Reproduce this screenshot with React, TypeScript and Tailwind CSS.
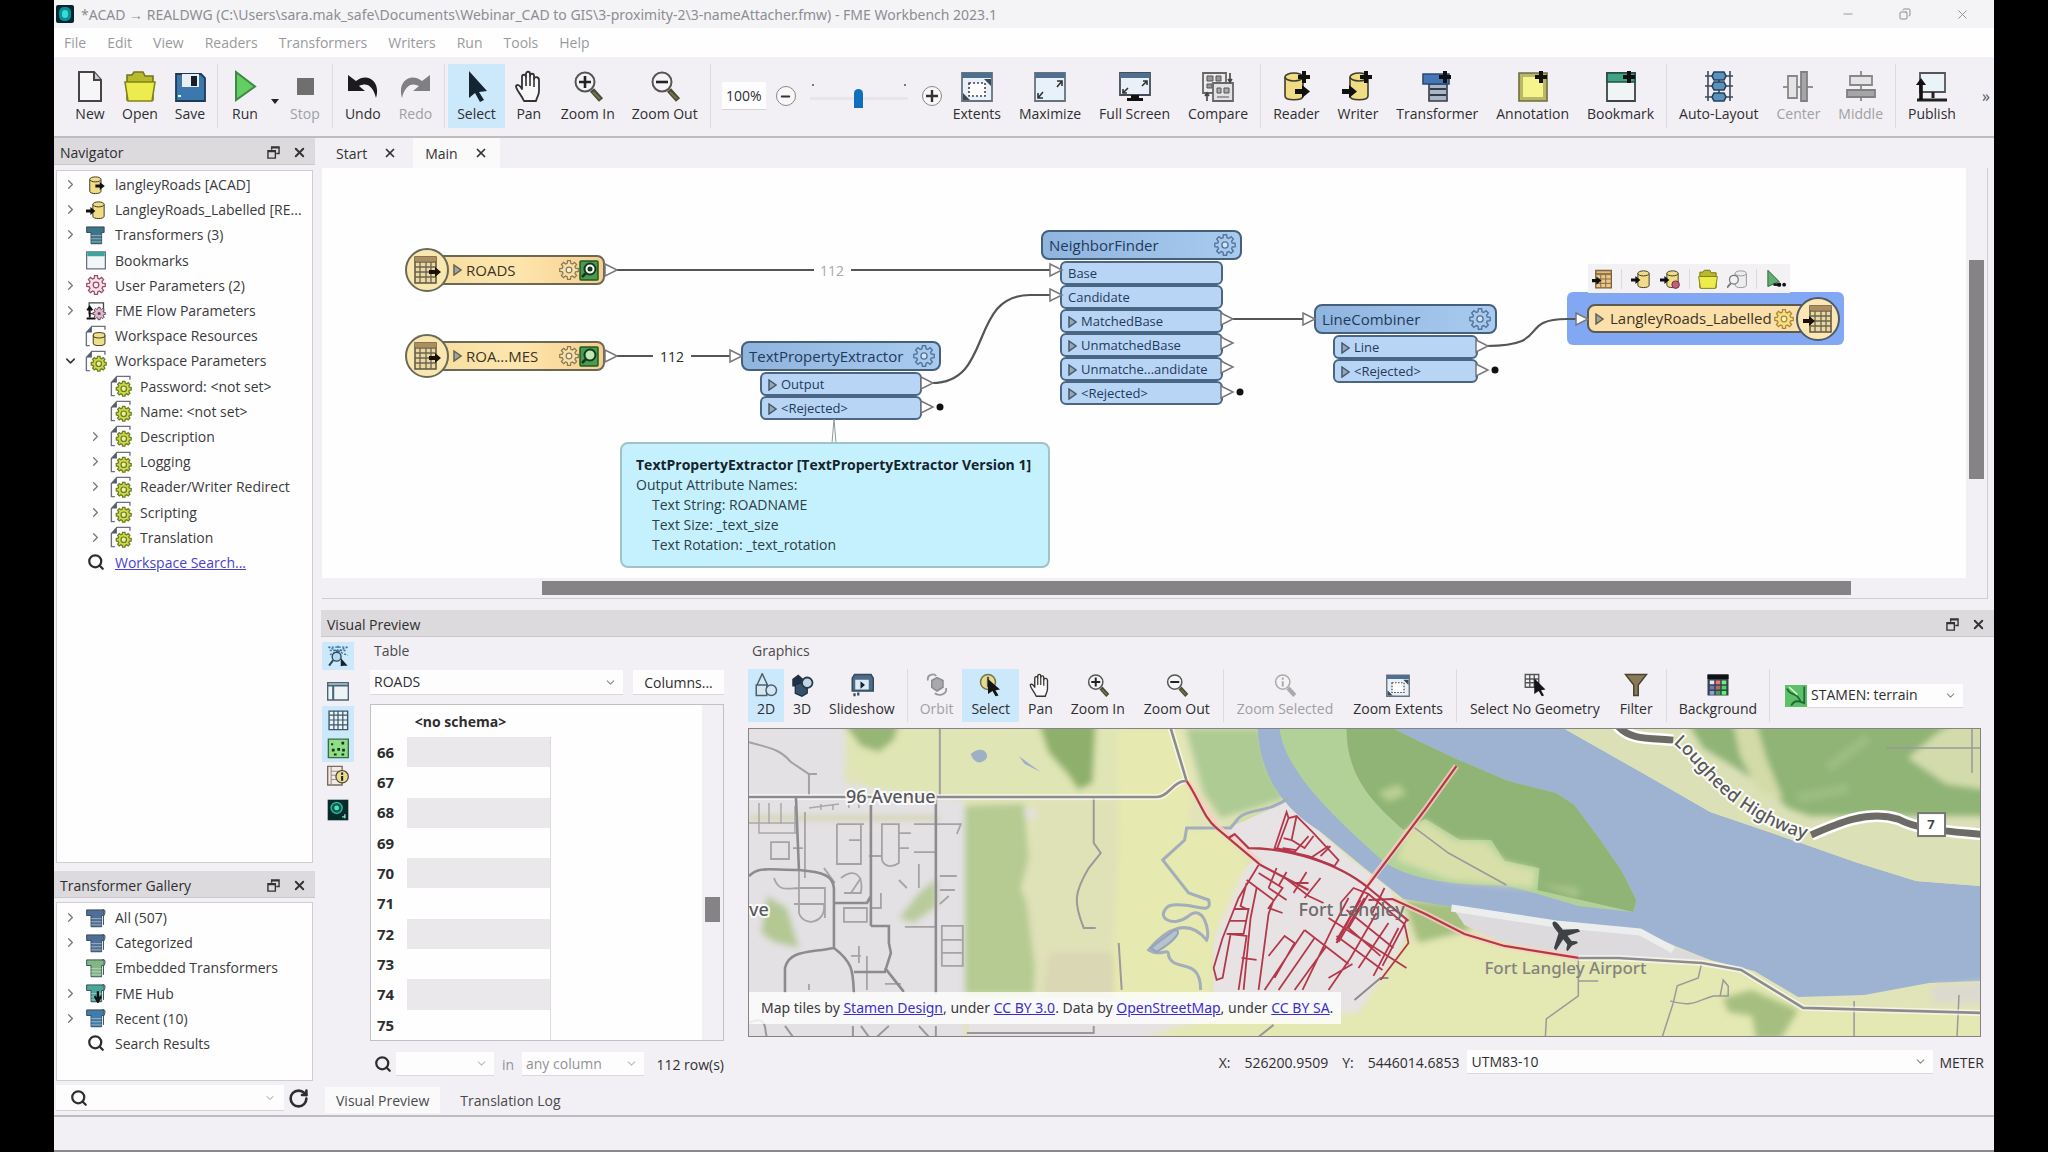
import React from "react";
import { ChevronRight, ChevronDown, Search, X, Minus, Copy, RotateCw } from "lucide-react";

type Kids = { children?: React.ReactNode };

function gearPath(cx: number, cy: number, outer: number, inner: number) {
  const pts: string[] = [];
  const step = Math.PI / 4;
  for (let i = 0; i < 8; i++) {
    const a = i * step;
    const add = (r: number, t: number) =>
      pts.push(`${(cx + r * Math.cos(t)).toFixed(2)},${(cy + r * Math.sin(t)).toFixed(2)}`);
    add(inner, a - step * 0.34);
    add(outer, a - step * 0.2);
    add(outer, a + step * 0.2);
    add(inner, a + step * 0.34);
  }
  return `M${pts.join("L")}Z`;
}

/* ---------- icons ---------- */

function Ico({ s = 32, children }: Kids & { s?: number }) {
  return (
    <svg width={s} height={s} viewBox="0 0 32 32" fill="none" aria-hidden="true" className="shrink-0">
      {children}
    </svg>
  );
}

const PlusMark = () => <path d="M24 1v12M18 7h12" stroke="#111" strokeWidth="4" />;
const Cyl = ({ x = 5, fill = "#f0dc84", stroke = "#3f3d2c" }) => (
  <g transform={`translate(${x} 0)`} fill={fill} stroke={stroke} strokeWidth="1.6">
    <path d="M1 7v19c0 5 18 5 18 0V7" />
    <ellipse cx="10" cy="7" rx="9" ry="4" />
  </g>
);
const Arrow = ({ x, y }: { x: number; y: number }) => (
  <path transform={`translate(${x} ${y})`} d="M0 3h7V-1l8 6.5l-8 6.5V8H0Z" fill="#111" />
);

const NewIcon = () => (
  <Ico>
    <path d="M5 2h15l7 8v21H5Z" fill="#f6f6f8" stroke="#444" strokeWidth="2" />
    <path d="M20 2v8h7" fill="#ccc" stroke="#444" strokeWidth="2" />
  </Ico>
);
const FolderIcon = ({ s = 32 }) => (
  <Ico s={s}>
    <path d="M3 30V5h5l2-3h9l2 4h8v24Z" fill="#b9b92c" stroke="#76761c" strokeWidth="1.6" />
    <path d="M4 31L1 12h30l-3 19Z" fill="#ecec4c" stroke="#83831e" strokeWidth="1.6" />
  </Ico>
);
const SaveIcon = () => (
  <Ico>
    <path d="M2 4h25l4 4v23H2Z" fill="#3b78ae" stroke="#1f3a55" strokeWidth="1.8" />
    <path d="M8 4h17v13H8Z" fill="#e9eef3" />
    <path d="M17 6h6v10h-6Z" fill="#17202a" />
    <path d="M4 26h3" stroke="#cfe" strokeWidth="2" />
  </Ico>
);
const RunIcon = () => (
  <Ico><path d="M7 2l19 14.5L7 30Z" fill="#63cf63" stroke="#3e8a44" strokeWidth="2" /></Ico>
);
const StopIcon = () => <Ico><path d="M8 8h17v17H8Z" fill="#6f6f70" /></Ico>;
const UndoIcon = () => (
  <Ico><path d="M1 5v16h17l-6-5c8-4 14 0 17 12c5-16-8-26-20-17Z" fill="#1b1b1d" /></Ico>
);
const RedoIcon = () => (
  <Ico><path d="M31 5v16H14l6-5C12 12 6 16 3 28C-2 12 11 2 23 11Z" fill="#808083" /></Ico>
);
const SelectIcon = () => (
  <Ico><path d="M8 1l18 20l-8 1l5 8l-4 2l-5-9l-6 5Z" fill="#132432" /></Ico>
);
const PanIcon = ({ s = 32, c = "#333" }) => (
  <Ico s={s}>
    <path d="M11 31C8 24 3 20 3 16c1-2 4-1 6 3V7c0-3 4-3 4 0V4c0-3 4-3 4 0v2c0-3 4-3 4 0v3c1-3 5-2 5 1v11c0 4-2 6-3 10Z" fill="#f8f8f8" stroke={c} strokeWidth="1.8" strokeLinejoin="round" />
    <path d="M13 7v9M17 6v10M21 9v8" stroke={c} strokeWidth="1.6" />
  </Ico>
);
const ZoomIcon = ({ s = 32, kind = "in", off = false }) => (
  <Ico s={s}>
    <path d="M20 20l9 10" stroke={off ? "#aaa" : "#4a4a38"} strokeWidth="5.5" />
    {!off && <path d="M21 22l7 7" stroke="#77724a" strokeWidth="2" />}
    <circle cx="13" cy="12" r="9.5" fill="#f4f4f6" stroke={off ? "#aaa" : "#555"} strokeWidth="2" />
    {kind === "in" && <path d="M13 6v12M7 12h12" stroke="#222" strokeWidth="2.6" />}
    {kind === "out" && <path d="M7 12h12" stroke="#222" strokeWidth="2.6" />}
    {kind === "info" && <path d="M13 6v3M13 11v7" stroke="#aaa" strokeWidth="2.6" />}
  </Ico>
);
const Frame = () => (
  <>
    <path d="M1 3h30v28H1Z" fill="#e8f1fa" stroke="#66737f" strokeWidth="1.8" />
    <path d="M1 3h30v5H1Z" fill="#4e6f8e" />
  </>
);
const ExtentsIcon = ({ s = 32 }) => (
  <Ico s={s}>
    <Frame />
    <path d="M8 13h16v13H8Z" stroke="#444" strokeWidth="1.6" strokeDasharray="2 2" fill="#fff" />
    <path d="M23 9h7v7ZM2 23v7h7Z" fill="#3d4a56" />
  </Ico>
);
const MaximizeIcon = () => (
  <Ico>
    <Frame />
    <path d="M23 17l5-6m-5 0h5v5M9 22l-5 6m0-5v5h5" stroke="#333" strokeWidth="1.6" />
  </Ico>
);
const FullIcon = () => (
  <Ico>
    <path d="M1 3h30v22H1Z" fill="#e8f1fa" stroke="#444e58" strokeWidth="1.8" />
    <path d="M1 3h30v5H1Z" fill="#4e6f8e" />
    <path d="M23 16l5-5m-4 0h4v4M9 18l-5 5m0-4v4h4" stroke="#333" strokeWidth="1.6" />
    <path d="M12 25h8v3h4v3H8v-3h4Z" fill="#111" />
  </Ico>
);
const CompareIcon = () => (
  <Ico>
    <path d="M1 3h23v20H1Z" fill="#ececee" stroke="#666" strokeWidth="1.8" />
    <path d="M5 6h6v5H5ZM14 6h5v5h-5ZM5 14h5v4H5Z" fill="#999" stroke="#555" />
    <path d="M11 13h20v18H11Z" fill="#e2e2e5" stroke="#666" strokeWidth="1.8" />
    <path d="M15 18h4v5h-4ZM22 18h5v5h-5ZM15 27h12" fill="#aaa" stroke="#555" />
    <path d="M28 3v8m-2-2l2 3l2-3M5 31v-7m-2 2l2-3l2 3" stroke="#444" strokeWidth="1.6" />
  </Ico>
);
const ReaderIcon = () => (
  <Ico><Cyl x={4} /><PlusMark /><Arrow x={15} y={16} /></Ico>
);
const WriterIcon = () => (
  <Ico><Cyl x={7} /><PlusMark /><Arrow x={0} y={16} /></Ico>
);
const TransformerIcon = () => (
  <Ico>
    <path d="M8 14h18v17H8Z" fill="#aab6c6" stroke="#333d4a" strokeWidth="1.6" />
    <path d="M9 19h16M9 25h16" stroke="#333d4a" strokeWidth="2" />
    <path d="M2 4h26v10H2Z" fill="#4476b8" stroke="#2c4a70" strokeWidth="1.6" />
    <PlusMark />
  </Ico>
);
const AnnotationIcon = () => (
  <Ico>
    <path d="M2 3h28v28H2Z" fill="#b8b76a" stroke="#6f6e3c" strokeWidth="1.6" />
    <path d="M6 7h20v20H6Z" fill="#f5f58c" />
    <PlusMark />
  </Ico>
);
const BookmarkIcon = () => (
  <Ico>
    <path d="M2 3h28v28H2Z" fill="#f0f4f4" stroke="#3d4443" strokeWidth="1.8" />
    <path d="M2 3h28v9H2Z" fill="#3fa384" stroke="#23503f" strokeWidth="1.6" />
    <PlusMark />
  </Ico>
);
const AutoIcon = () => (
  <Ico>
    <path d="M5 1v30M27 1v30M2 6h28M2 16h28M2 27h28M16 6v21" stroke="#3c4a58" strokeWidth="1.6" />
    <path d="M11 2h10l2 4l-2 4H11L9 6ZM11 12h10l2 4l-2 4H11l-2-4ZM11 23h10l2 4l-2 4H11l-2-4Z" fill="#5a91bd" stroke="#24415a" strokeWidth="1.6" />
  </Ico>
);
const CenterIcon = () => (
  <Ico>
    <path d="M1 17h30" stroke="#888" strokeWidth="1.8" />
    <path d="M6 6h9v22H6Z" fill="#e4e4e6" stroke="#888" strokeWidth="1.8" />
    <path d="M19 2h6v29h-6Z" fill="#a5a5a8" stroke="#808083" strokeWidth="1.8" />
  </Ico>
);
const MiddleIcon = () => (
  <Ico>
    <path d="M16 1v30" stroke="#888" strokeWidth="1.8" />
    <path d="M5 6h22v9H5Z" fill="#e4e4e6" stroke="#888" strokeWidth="1.8" />
    <path d="M2 20h28v7H2Z" fill="#a5a5a8" stroke="#808083" strokeWidth="1.8" />
  </Ico>
);
const PublishIcon = () => (
  <Ico>
    <path d="M4 3h25v19H4Z" fill="#eaf3f8" stroke="#555" strokeWidth="1.8" />
    <path d="M17 22v6M1 30h30" stroke="#222" strokeWidth="3" />
    <path d="M5 30V14" stroke="#111" strokeWidth="3.6" />
    <path d="M0 15l5-7l5 7Z" fill="#111" />
  </Ico>
);

const DbRight = () => <Ico s={20}><Cyl x={5} /><Arrow x={15} y={12} /></Ico>;
const DbLeft = ({ bad = false }) => (
  <Ico s={20}>
    <Cyl x={10} />
    <Arrow x={0} y={12} />
    {bad && <circle cx="25" cy="25" r="6" fill="#c0607a" stroke="#7a2c40" strokeWidth="1.6" />}
  </Ico>
);
const ToolStack = ({ c = "#3f7389", scroll = false, down = false }) => (
  <Ico s={20}>
    <path d="M1 3h28v9h-4v18H8V12H1Z" fill={c} stroke="#2c4150" strokeWidth="1.4" />
    <path d="M8 17h17M8 22h17M8 27h17" stroke="#dfe8ee" strokeOpacity=".6" strokeWidth="1.4" />
    {scroll && <path d="M25 4c6-5 7 5 3 8v15" stroke="#4a5560" strokeWidth="1.6" />}
    {down && <path d="M19 13v12m-5-4l5 9l5-9" stroke="#111" strokeWidth="3.6" />}
  </Ico>
);
const BookmarkSmall = () => (
  <Ico s={20}>
    <path d="M1 3h30v27H1Z" fill="#f3f6f8" stroke="#68727c" strokeWidth="2" />
    <path d="M2 3h28v7H2Z" fill="#3ba79a" />
  </Ico>
);
const GearIcon = ({ s = 20, c = "#a04a66", f = "#f6e3ea" }) => (
  <Ico s={s}>
    <path d={gearPath(16, 16, 15, 11)} fill={f} stroke={c} strokeWidth="2" />
    <circle cx="16" cy="16" r="4.5" fill="#fff" fillOpacity=".5" stroke={c} strokeWidth="2" />
  </Ico>
);
const FlowIcon = () => (
  <Ico s={20}>
    <path d="M5 3h23v17H5Z" stroke="#444" strokeWidth="2" />
    <path d="M6 26V11m-4 4l4-6l4 6M1 28h14" stroke="#111" strokeWidth="3" />
    <path d={gearPath(21, 20, 10, 7.5)} fill="#d9b9cd" stroke="#6a4258" strokeWidth="1.6" />
    <circle cx="21" cy="20" r="2.5" fill="#6a4258" />
  </Ico>
);
const DocGear = ({ db = false }) => (
  <Ico s={22}>
    <path d="M7 30H2V11l8-9h19v5" stroke="#6b707c" strokeWidth="2" />
    <path d="M2 11l8-9v9Z" fill="#555b68" />
    {db ? (
      <g fill="#efdf8a" stroke="#4e4a2c" strokeWidth="1.6">
        <path d="M12 15v11c0 5 17 5 17 0V15" />
        <ellipse cx="20.5" cy="15" rx="8.5" ry="4" />
      </g>
    ) : (
      <>
        <path d={gearPath(20, 20, 11, 8.5)} fill="#cbd94a" stroke="#6d7a22" strokeWidth="1.8" />
        <circle cx="20" cy="20" r="4" fill="#e9f0a0" stroke="#6d7a22" strokeWidth="1.8" />
      </>
    )}
  </Ico>
);
const TableGlyph = ({ flip = false }) => (
  <svg width="30" height="30" viewBox="0 0 30 30" fill="none" aria-hidden="true">
    <g transform={flip ? "translate(6 1)" : "translate(2 1)"}>
      <path d="M1 1h21v26H1Z" fill="#e9d9a0" stroke="#5b5340" strokeWidth="1.5" />
      <path d="M1 1h21v4H1Z" fill="#b08d5a" />
      <path d="M1 6h21M1 11h21M1 16h21M1 21h21M6 6v21M12 6v21M17 6v21" stroke="#6b6350" strokeWidth="1.3" />
    </g>
    <path transform={flip ? "translate(0 13)" : "translate(17 13)"} d="M0 2h6V-1l6 5l-6 5V6H0Z" fill="#1a1208" />
  </svg>
);

const AutoInspectIcon = () => (
  <Ico s={22}>
    <path d="M2 3h28M4 8h24M2 3l28 12M30 3L4 14M16 1v12" stroke="#3c7098" strokeWidth="2" strokeDasharray="3 2" />
    <circle cx="14" cy="17" r="6.5" fill="#b9d7ee" stroke="#2c4860" strokeWidth="2" />
    <path d="M9 22l-6 8" stroke="#2c4860" strokeWidth="3" />
    <path d="M20 19l10 11h-6l-4 1Z" fill="#14202c" />
  </Ico>
);
const LayoutIcon = () => (
  <Ico s={22}>
    <path d="M1 4h30v25H1Z" fill="#eef3f6" stroke="#4b6578" strokeWidth="2" />
    <path d="M1 8h30M9 8v21" stroke="#4b6578" strokeWidth="3" />
  </Ico>
);
const GridIcon = () => (
  <Ico s={22}>
    <path d="M3 3h27v27H3Z" fill="#eaf4fb" stroke="#3f5668" strokeWidth="2" />
    <path d="M3 9h27M3 16h27M3 23h27M10 3v27M16 3v27M23 3v27" stroke="#3f5668" strokeWidth="1.8" />
  </Ico>
);
const ScatterIcon = () => (
  <Ico s={22}>
    <path d="M2 3h29v27H2Z" fill="#8fdf88" stroke="#3f6a45" strokeWidth="2" />
    <path d="M7 17h4v4H7ZM15 16h4v4h-4ZM22 17h4v4h-4ZM21 7h4v4h-4ZM10 24h4v3h-4ZM21 24h4v3h-4ZM6 9h3v3H6Z" fill="#17351c" />
  </Ico>
);
const InfoIcon = () => (
  <Ico s={22}>
    <path d="M1 2h21v27H1Z" fill="#f1ece6" stroke="#786a60" strokeWidth="2" />
    <path d="M6 2v27M6 9h14M6 15h8M6 21h7" stroke="#a08f84" strokeWidth="1.6" />
    <circle cx="22" cy="17" r="9" fill="#e8dc92" stroke="#4c4630" strokeWidth="1.8" />
    <path d="M22 11v3M22 16v7" stroke="#222" strokeWidth="3" />
  </Ico>
);
const InspectorIcon = () => (
  <Ico s={22}>
    <path d="M1 1h30v30H1Z" fill="#062b2b" />
    <circle cx="14" cy="13" r="8" fill="#0e5a50" stroke="#2fb79a" strokeWidth="2" />
    <circle cx="14" cy="13" r="3.5" fill="#56e0b8" />
    <path d="M22 26h3M26 22v6" stroke="#8fe6d0" strokeWidth="2" />
  </Ico>
);
const FmeLogo = () => (
  <svg width="18" height="18" viewBox="0 0 18 18" aria-hidden="true">
    <rect width="18" height="18" rx="2" fill="#04262c" />
    <rect x="3" y="2" width="12" height="14" rx="5" fill="#0b8f96" />
    <rect x="6" y="5" width="6" height="8" rx="3" fill="#35dcd8" />
  </svg>
);
const TwoDIcon = () => (
  <Ico s={24}>
    <path d="M11 1l7 15H4ZM3 16h14v14H3Z" fill="#d7e7f2" stroke="#4a6070" strokeWidth="2" />
    <circle cx="23" cy="23" r="7" fill="#d7e7f2" stroke="#4a6070" strokeWidth="2" />
  </Ico>
);
const ThreeDIcon = () => (
  <Ico s={24}>
    <path d="M3 8l8-6l9 8l-6 8H3Z" fill="#1f3146" />
    <path d="M7 16l8-3l8 3v11l-7 4l-9-4Z" fill="#35506c" stroke="#1a2a3a" strokeWidth="1.6" />
    <circle cx="23" cy="13" r="7" fill="#c4d6e6" stroke="#263a4c" strokeWidth="2.4" />
  </Ico>
);
const SlideIcon = () => (
  <Ico s={24}>
    <path d="M6 2h22l3 5v17H3V7Z" fill="#4d6c88" stroke="#37495a" strokeWidth="2" />
    <path d="M7 9h18v13H7Z" fill="#dcebf7" />
    <path d="M14 11l6 5l-6 5Z" fill="#123" />
    <path d="M6 27v4M11 26v4" stroke="#37495a" strokeWidth="3" />
  </Ico>
);
const OrbitIcon = () => (
  <Ico s={24}>
    <path d="M4 10C2 2 12 0 15 4M28 20c2 9-10 11-15 7" stroke="#999" strokeWidth="2.4" />
    <path d="M9 10l7-4l8 4v9l-8 5l-7-5Z" fill="#a9a9ac" stroke="#8c8c8f" strokeWidth="2" />
  </Ico>
);
const PickIcon = () => (
  <Ico s={24}>
    <circle cx="12" cy="12" r="10" fill="#e2dc8e" stroke="#777348" strokeWidth="2" />
    <path d="M12 5v14" stroke="#555" strokeWidth="3" />
    <path d="M12 8l16 14l-6 1l4 7l-4 1l-4-7l-6 4Z" fill="#151515" />
  </Ico>
);
const NoGeomIcon = () => (
  <Ico s={24}>
    <path d="M3 2h18v17H3ZM9 2v17M15 2v17M3 8h18M3 13h18" stroke="#555" strokeWidth="1.8" />
    <path d="M15 7l15 15l-6 1l4 7l-3 1l-4-7l-6 4Z" fill="#151515" />
  </Ico>
);
const FilterIcon = () => (
  <Ico s={24}><path d="M2 2h28L19 16v14h-6V16Z" fill="#8a7a58" stroke="#4a4334" strokeWidth="2" /></Ico>
);
const BackgroundIcon = () => (
  <Ico s={24}>
    <path d="M2 2h28v28H2Z" fill="#345" />
    <path d="M2 2h28v6H2Z" fill="#111" />
    {["#e8e8e8", "#e77", "#7e7", "#77a", "#b66", "#4d5", "#99d", "#595", "#5f5"].map((c, i) => (
      <rect key={i} x={5 + (i % 3) * 8} y={10 + Math.floor(i / 3) * 7} width="6" height="5" fill={c} />
    ))}
  </Ico>
);
const StamenIcon = () => (
  <Ico s={22}>
    <path d="M0 0h32v32H0Z" fill="#5fc06a" />
    <path d="M3 5c4 12 14 3 20 20M9 30c4-8 10-8 18-4M28 2v26" stroke="#1f6a34" strokeWidth="2.6" />
    <path d="M6 3l12 11" stroke="#d7f5d8" strokeWidth="2" />
  </Ico>
);

/* ---------- window chrome ---------- */

type ButtonProps = { icon: React.ReactNode; label: string; active?: boolean; off?: boolean; pad?: "tight" | "wide" };

function ToolButton({ icon, label, active, off, pad }: ButtonProps) {
  return (
    <button
      type="button"
      disabled={off}
      className={`flex h-16 shrink-0 flex-col items-center justify-between pt-1.5 pb-1 text-[14px] leading-5 whitespace-nowrap ${pad === "tight" ? "px-2" : "px-[9px]"} ${active ? "bg-[#cce8fb]" : ""} ${off ? "text-[#a0a0a3]" : "text-[#2e2e30]"}`}
    >
      {icon}
      <span>{label}</span>
    </button>
  );
}

function ViewButton({ icon, label, active, off, pad }: ButtonProps) {
  const px = pad === "tight" ? "px-1.5" : pad === "wide" ? "px-2.5" : "px-[9px]";
  return (
    <button
      type="button"
      disabled={off}
      className={`flex h-[53px] shrink-0 flex-col items-center pt-1 text-[14px] leading-6 whitespace-nowrap ${px} ${active ? "bg-[#cce8fb]" : ""} ${off ? "text-[#a0a0a3]" : "text-[#2e2e30]"}`}
    >
      {icon}
      <span>{label}</span>
    </button>
  );
}

const Sep = () => <span className="mx-[3px] w-px shrink-0 self-stretch bg-[#dddbe0]" />;

function DockHeader({ title }: { title: string }) {
  return (
    <header className="flex h-[27px] shrink-0 items-center border-b border-[#c9c7cb] bg-[#dcdadd] pt-0.5 pr-2 pl-1.5 text-[14px] text-[#2e2e30]">
      <h2 className="flex-1">{title}</h2>
      <button type="button" aria-label={`Float ${title}`} className="mr-3">
        <svg width="13" height="13" viewBox="0 0 14 14" fill="none" stroke="#333" strokeWidth="1.5">
          <path d="M5 4V1h8v7h-3M5 2h8M1 5h8v8H1ZM1 6h8" />
        </svg>
      </button>
      <button type="button" aria-label={`Close ${title}`}>
        <X size={15} strokeWidth={3} color="#333" />
      </button>
    </header>
  );
}

function Combo({ label, value, className, off }: { label: string; value: string; className: string; off?: boolean }) {
  return (
    <div className={`relative flex items-center border-b border-[#dad8dc] bg-[#fdfdfe] ${className}`}>
      <select
        aria-label={label}
        disabled={off}
        className={`w-full appearance-none bg-transparent pr-6 pl-1 text-[14px] leading-6 outline-none ${off ? "text-[#929295] opacity-100" : "text-[#2e2e30]"}`}
      >
        <option>{value}</option>
      </select>
      <ChevronDown size={13} color={off ? "#bbb" : "#888"} className="pointer-events-none absolute right-1.5" />
    </div>
  );
}

const menus = ["File", "Edit", "View", "Readers", "Transformers", "Writers", "Run", "Tools", "Help"];

function TitleBar() {
  return (
    <header className="flex h-7 shrink-0 items-center bg-[#f4f4f6] text-[14px] text-[#8d8d92]">
      <span className="mr-[7px] ml-[2px]"><FmeLogo /></span>
      <h1 className="flex-1 font-['Noto_Sans',sans-serif] whitespace-nowrap">
        *ACAD → REALDWG (C:\Users\sara.mak_safe\Documents\Webinar_CAD to GIS\3-proximity-2\3-nameAttacher.fmw) - FME Workbench 2023.1
      </h1>
      <div className="flex items-center gap-11 pr-6">
        <button type="button" aria-label="Minimize"><Minus size={14} strokeWidth={1.5} /></button>
        <button type="button" aria-label="Restore"><Copy size={12} strokeWidth={2} className="-scale-x-100" /></button>
        <button type="button" aria-label="Close"><X size={15} strokeWidth={1.5} /></button>
      </div>
    </header>
  );
}

function MainToolbar() {
  return (
    <div role="toolbar" aria-label="Main" className="flex h-[81px] shrink-0 items-start overflow-hidden border-b-2 border-[#bebcc0] bg-[#f2f0f4] pt-[7px] pl-3">
      <div className="flex h-16 min-w-0 flex-1 items-center">
        <ToolButton icon={<NewIcon />} label="New" pad="tight" />
        <ToolButton icon={<FolderIcon />} label="Open" pad="tight" />
        <ToolButton icon={<SaveIcon />} label="Save" pad="tight" />
        <Sep />
        <ToolButton icon={<RunIcon />} label="Run" pad="tight" />
        <button type="button" aria-label="Run options" className="mt-3 px-0.5">
          <svg width="8" height="6" viewBox="0 0 8 6"><path d="M0 0h8L4 5Z" fill="#222" /></svg>
        </button>
        <ToolButton icon={<StopIcon />} label="Stop" off pad="tight" />
        <Sep />
        <ToolButton icon={<UndoIcon />} label="Undo" />
        <ToolButton icon={<RedoIcon />} label="Redo" off />
        <Sep />
        <ToolButton icon={<SelectIcon />} label="Select" active />
        <ToolButton icon={<PanIcon />} label="Pan" pad="tight" />
        <ToolButton icon={<ZoomIcon />} label="Zoom In" pad="tight" />
        <ToolButton icon={<ZoomIcon kind="out" />} label="Zoom Out" />
        <Sep />
        <input aria-label="Zoom level" defaultValue="100%" className="ml-2 h-7 w-11 shrink-0 border-b border-[#d5d3d7] bg-[#fdfdfe] text-center text-[14px] text-[#2e2e30] outline-none" />
        <button type="button" aria-label="Decrease zoom" className="ml-2.5 flex size-5 shrink-0 items-center justify-center rounded-full border border-[#888] bg-[#f8f8f9]">
          <Minus size={13} strokeWidth={3.5} color="#333" />
        </button>
        <span className="mx-3.5 flex w-[98px] shrink-0 flex-col">
          <span className="flex h-1 justify-between px-0.5"><i className="size-0.5 bg-[#777]" /><i className="size-0.5 bg-[#777]" /></span>
          <input
            type="range"
            aria-label="Zoom"
            defaultValue={50}
            className="h-5 w-full appearance-none bg-transparent outline-none [&::-webkit-slider-runnable-track]:h-[3px] [&::-webkit-slider-runnable-track]:bg-[#e7e5e9] [&::-webkit-slider-thumb]:-mt-2 [&::-webkit-slider-thumb]:h-[19px] [&::-webkit-slider-thumb]:w-[9px] [&::-webkit-slider-thumb]:appearance-none [&::-webkit-slider-thumb]:rounded-t-full [&::-webkit-slider-thumb]:bg-[#0f6fbe]"
          />
        </span>
        <button type="button" aria-label="Increase zoom" className="mr-0.5 flex size-5 shrink-0 items-center justify-center rounded-full border border-[#888] bg-[#f8f8f9]">
          <svg width="12" height="12" viewBox="0 0 12 12"><path d="M6 0v12M0 6h12" stroke="#333" strokeWidth="2.4" /></svg>
        </button>
        <ToolButton icon={<ExtentsIcon />} label="Extents" />
        <ToolButton icon={<MaximizeIcon />} label="Maximize" />
        <ToolButton icon={<FullIcon />} label="Full Screen" />
        <ToolButton icon={<CompareIcon />} label="Compare" />
        <Sep />
        <ToolButton icon={<ReaderIcon />} label="Reader" />
        <ToolButton icon={<WriterIcon />} label="Writer" />
        <ToolButton icon={<TransformerIcon />} label="Transformer" />
        <ToolButton icon={<AnnotationIcon />} label="Annotation" />
        <ToolButton icon={<BookmarkIcon />} label="Bookmark" />
        <Sep />
        <ToolButton icon={<AutoIcon />} label="Auto-Layout" />
        <ToolButton icon={<CenterIcon />} label="Center" off />
        <ToolButton icon={<MiddleIcon />} label="Middle" off />
        <Sep />
        <ToolButton icon={<PublishIcon />} label="Publish" />
        <button type="button" aria-label="More tools" className="mr-1 ml-auto text-[16px] leading-4 text-[#555]">»</button>
      </div>
    </div>
  );
}

/* ---------- side panels ---------- */

type Row = { label: string; icon: React.ReactNode; open?: "closed" | "open"; child?: boolean; link?: boolean };

const SearchGlyph = () => <Search size={18} strokeWidth={3} color="#2e2e30" />;

const navRows: Row[] = [
  { label: "langleyRoads [ACAD]", icon: <DbRight />, open: "closed" },
  { label: "LangleyRoads_Labelled [RE...", icon: <DbLeft />, open: "closed" },
  { label: "Transformers (3)", icon: <ToolStack />, open: "closed" },
  { label: "Bookmarks", icon: <BookmarkSmall /> },
  { label: "User Parameters (2)", icon: <GearIcon />, open: "closed" },
  { label: "FME Flow Parameters", icon: <FlowIcon />, open: "closed" },
  { label: "Workspace Resources", icon: <DocGear db /> },
  { label: "Workspace Parameters", icon: <DocGear />, open: "open" },
  { label: "Password: <not set>", icon: <DocGear />, child: true },
  { label: "Name: <not set>", icon: <DocGear />, child: true },
  { label: "Description", icon: <DocGear />, open: "closed", child: true },
  { label: "Logging", icon: <DocGear />, open: "closed", child: true },
  { label: "Reader/Writer Redirect", icon: <DocGear />, open: "closed", child: true },
  { label: "Scripting", icon: <DocGear />, open: "closed", child: true },
  { label: "Translation", icon: <DocGear />, open: "closed", child: true },
  { label: "Workspace Search...", icon: <SearchGlyph />, link: true },
];

const galleryRows: Row[] = [
  { label: "All (507)", icon: <ToolStack c="#506f96" scroll />, open: "closed" },
  { label: "Categorized", icon: <ToolStack c="#506f96" scroll />, open: "closed" },
  { label: "Embedded Transformers", icon: <ToolStack c="#82b785" scroll /> },
  { label: "FME Hub", icon: <ToolStack c="#4aa79a" scroll down />, open: "closed" },
  { label: "Recent (10)", icon: <ToolStack c="#417da8" scroll />, open: "closed" },
  { label: "Search Results", icon: <SearchGlyph /> },
];

function Tree({ rows, className }: { rows: Row[]; className: string }) {
  return (
    <ul className={`grid auto-rows-fr text-[14px] text-[#3a3a3d] ${className}`}>
      {rows.map((r) => (
        <li key={r.label} className={`flex items-center whitespace-nowrap ${r.child ? "pl-[31px]" : "pl-1.5"}`}>
          <span className="flex w-[15px] justify-center">
            {r.open === "closed" && <ChevronRight size={15} strokeWidth={2} color="#777" />}
            {r.open === "open" && <ChevronDown size={16} strokeWidth={2.4} color="#333" />}
          </span>
          <span className="ml-[7px] flex w-[22px] justify-center">{r.icon}</span>
          <span className="ml-2">
            {r.link ? <a href="#search" className="text-[#4a3fd0] underline">{r.label}</a> : r.label}
          </span>
        </li>
      ))}
    </ul>
  );
}

function SidePanels() {
  return (
    <aside className="flex w-[261px] shrink-0 flex-col">
      <DockHeader title="Navigator" />
      <section aria-label="Navigator" className="mx-0.5 mt-[5px] mb-2 flex-1 border border-[#cfcdd2] bg-[#fefefe] pt-px">
        <Tree rows={navRows} className="h-[403px]" />
      </section>
      <DockHeader title="Transformer Gallery" />
      <section aria-label="Transformer Gallery" className="mx-0.5 mt-1 h-[179px] border border-[#cfcdd2] bg-[#fefefe] pt-0.5">
        <Tree rows={galleryRows} className="h-[151px]" />
      </section>
      <div className="mt-1 mb-1 flex h-[26px] items-center pl-0.5">
        <label className="flex h-full w-[228px] items-center border-b border-[#d5d3d7] bg-[#fdfdfe] pr-2 pl-3.5">
          <SearchGlyph />
          <input aria-label="Search transformers" className="min-w-0 flex-1 bg-transparent text-[14px] outline-none" />
          <ChevronDown size={12} color="#999" />
        </label>
        <button type="button" aria-label="Refresh" className="ml-1"><RotateCw size={21} strokeWidth={3} color="#2e2e30" /></button>
      </div>
    </aside>
  );
}

/* ---------- canvas ---------- */

const PlayMark = ({ c = "#44586e" }) => (
  <svg width="9" height="12" viewBox="0 0 9 12" className="shrink-0" aria-hidden="true">
    <path d="M1 1l7 5l-7 5Z" fill="#9aa7b3" stroke={c} strokeWidth="1.5" />
  </svg>
);

function Feature({ name, className, viewed }: { name: string; className: string; viewed?: boolean }) {
  return (
    <div className={`absolute flex h-11 w-[200px] items-center ${className}`}>
      <div className="ml-[21px] flex h-[30px] flex-1 items-center rounded-r-lg border-2 border-[#6b6858] bg-linear-to-r from-[#f6dea0] via-[#fde6ae] to-[#f8cf8c] pr-1 pl-[25px] text-[15px] text-[#3a3424]">
        <PlayMark c="#6b6040" />
        <span className="ml-1 flex-1 whitespace-nowrap">{name}</span>
        <GearIcon s={20} c="#8a7a58" f="#f8dfa6" />
        <svg width="20" height="22" viewBox="0 0 20 22" aria-hidden="true">
          <rect x="1" y="2" width="18" height="19" rx="1" fill="#4c9a50" stroke="#215a28" strokeWidth="1.5" />
          <circle cx="11" cy="10" r="5.5" fill={viewed ? "#fff" : "#bfe8b4"} stroke="#123b1b" strokeWidth="2" />
          {viewed && <circle cx="11" cy="10" r="2.5" fill="#123b1b" />}
          <path d="M7 14l-4 4" stroke="#123b1b" strokeWidth="2.5" />
        </svg>
      </div>
      <span className="absolute left-0 flex size-11 items-center justify-center rounded-full border-2 border-[#6b6858] bg-[#f9e7b0]">
        <TableGlyph />
      </span>
    </div>
  );
}

type Port = { name: string; input?: boolean };

function Transformer({ name, ports, className }: { name: string; ports: Port[]; className: string }) {
  return (
    <div className={`absolute ${className}`}>
      <div className="flex h-[30px] items-center rounded-lg border-2 border-[#46607c] bg-linear-to-r from-[#8fb4de] to-[#a9cbef] pr-1 pl-1.5 text-[15px] text-[#1f3a5c]">
        <span className="flex-1">{name}</span>
        <GearIcon s={22} c="#54759b" f="#a9c9ee" />
      </div>
      <ul className="mx-[19px] mt-px">
        {ports.map((p) => (
          <li key={p.name} className="flex h-6 items-center gap-1 rounded-md border-2 border-[#4a6684] bg-[#b9d5f5] pt-0.5 pl-1.5 text-[13px] whitespace-nowrap text-[#1f3a5c]">
            {!p.input && <PlayMark />}
            {p.name}
          </li>
        ))}
      </ul>
    </div>
  );
}

const portTriangles = [
  [283, 102], [283, 188], [408, 188], [599, 215], [599, 239], [728, 102], [728, 127], [899, 151],
  [899, 175], [899, 199], [899, 224], [981, 151], [1154, 178], [1154, 202], [1254, 151],
];
const portDots = [[618, 239], [918, 224], [1173, 202]];

function Links() {
  return (
    <svg className="pointer-events-none absolute inset-0 h-full w-full" fill="none" aria-hidden="true">
      <g stroke="#555558" strokeWidth="2.2">
        <path d="M293 102H492M529 102H729" />
        <path d="M293 188H331M369 188H409" />
        <path d="M610 215C672 215 646 127 708 127H729" />
        <path d="M909 151H982" />
        <path d="M1165 178C1230 178 1195 151 1245 151H1256" />
      </g>
      {portTriangles.map(([x, y]) => (
        <path key={`${x}-${y}`} d={`M${x} ${y - 6}l12 6l-12 6Z`} fill="#fff" stroke="#77777c" strokeWidth="1.5" />
      ))}
      {portDots.map(([x, y]) => <circle key={x} cx={x} cy={y} r="3.5" fill="#111" />)}
      <path d="M512 251L510 275M512 251L514 275" stroke="#8d9a9a" />
    </svg>
  );
}

function Canvas() {
  return (
    <section aria-label="Workspace" className="flex h-[431px] shrink-0 flex-col border-r border-b border-[#cfcdd2]">
      <div className="flex min-h-0 flex-1">
        <div className="relative min-w-0 flex-1 overflow-hidden bg-[#fefefe]">
          <Feature name="ROADS" className="top-[80px] left-[83px]" viewed />
          <Feature name="ROA...MES" className="top-[166px] left-[83px]" />
          <Transformer
            name="TextPropertyExtractor"
            className="top-[173px] left-[419px] w-[200px]"
            ports={[{ name: "Output" }, { name: "<Rejected>" }]}
          />
          <Transformer
            name="NeighborFinder"
            className="top-[62px] left-[719px] w-[201px]"
            ports={[{ name: "Base", input: true }, { name: "Candidate", input: true }, { name: "MatchedBase" }, { name: "UnmatchedBase" }, { name: "Unmatche...andidate" }, { name: "<Rejected>" }]}
          />
          <Transformer
            name="LineCombiner"
            className="top-[136px] left-[992px] w-[183px]"
            ports={[{ name: "Line" }, { name: "<Rejected>" }]}
          />
          <div className="absolute top-[124px] left-[1245px] h-[53px] w-[277px] rounded-md bg-[#82a8f3]">
            <div className="absolute top-3 left-5 flex h-[29px] w-[230px] items-center rounded-l-lg border-2 border-[#5d5a4a] bg-[#fbe0ab] pl-1.5 text-[15px] text-[#3a3424]">
              <PlayMark c="#6b6040" />
              <span className="ml-1.5 whitespace-nowrap">LangleyRoads_Labelled</span>
              <span className="ml-0.5"><GearIcon s={20} c="#b0823c" f="#f3e27c" /></span>
            </div>
            <span className="absolute top-[5px] right-1 flex size-11 items-center justify-center rounded-full border-2 border-[#4e5a66] bg-[#fbe6b4]">
              <TableGlyph flip />
            </span>
          </div>
          <div role="toolbar" aria-label="Feature type" className="absolute top-[96px] left-[1266px] flex h-[29px] w-[202px] items-center justify-between bg-[#f4f1f4] px-1">
            <button type="button" aria-label="Properties">
              <Ico s={20}>
                <path d="M6 2h25v28H6Z" fill="#e8c88c" stroke="#7a5a34" strokeWidth="2" />
                <path d="M6 9h25M6 16h25M6 23h25M14 9v21M22 9v21M6 3h25v4H6Z" stroke="#8a6a40" strokeWidth="1.6" />
                <Arrow x={0} y={13} />
              </Ico>
            </button>
            <span className="h-5 w-px bg-[#dcdadd]" />
            <button type="button" aria-label="Writer"><DbLeft /></button>
            <button type="button" aria-label="Writer parameters"><DbLeft bad /></button>
            <span className="h-5 w-px bg-[#dcdadd]" />
            <button type="button" aria-label="Open folder"><FolderIcon s={20} /></button>
            <button type="button" aria-label="Inspect">
              <Ico s={20}>
                <Cyl x={12} fill="#ececee" stroke="#999" />
                <circle cx="11" cy="17" r="7" fill="#f2f2f4" stroke="#777" strokeWidth="2" />
                <path d="M6 23l-6 7" stroke="#777" strokeWidth="3" />
              </Ico>
            </button>
            <span className="h-5 w-px bg-[#dcdadd]" />
            <button type="button" aria-label="Run to this">
              <Ico s={20}>
                <path d="M3 2l18 18l-18 8Z" fill="#5fae72" stroke="#2f6a42" strokeWidth="1.6" />
                <path d="M12 25h8" stroke="#111" strokeWidth="4" />
                <circle cx="21" cy="25" r="3.5" fill="#111" /><circle cx="29" cy="25" r="3" fill="#111" />
              </Ico>
            </button>
          </div>
          <Links />
          <span className="absolute top-[93px] left-[498px] text-[14px] leading-5 text-[#a9a9ab]">112</span>
          <span className="absolute top-[179px] left-[338px] text-[14px] leading-5 text-[#2b2b2b]">112</span>
          <div className="absolute top-[274px] left-[298px] w-[430px] rounded-lg border-2 border-[#9fc4c4] bg-[#c5f0fe] px-3.5 py-[11px] text-[14px] leading-5 whitespace-nowrap text-[#2c3e46]">
            <p className="font-bold text-[#14242c]">TextPropertyExtractor [TextPropertyExtractor Version 1]</p>
            <p>Output Attribute Names:</p>
            <div className="pl-4">
              <p>Text String: ROADNAME</p>
              <p>Text Size: _text_size</p>
              <p>Text Rotation: _text_rotation</p>
            </div>
          </div>
        </div>
        <div className="w-[21px] shrink-0 bg-[#f2f0f4] pt-[92px]"><div className="mx-[3px] h-[219px] bg-[#858385]" /></div>
      </div>
      <div className="h-5 shrink-0 bg-[#f2f0f4] pt-[3px] pr-[136px] pl-[220px]"><div className="h-3.5 bg-[#858385]" /></div>
    </section>
  );
}

/* ---------- map ---------- */

function TerrainMap() {
  return (
    <svg viewBox="0 0 1232 309" preserveAspectRatio="xMidYMid slice" className="h-full w-full" role="img" aria-label="Terrain map of Fort Langley" fontFamily="Noto Sans, sans-serif">
      <defs>
        <filter id="soft" x="-5%" y="-5%" width="110%" height="110%"><feGaussianBlur stdDeviation="3" /></filter>
        <path id="lougheed" d="M925 15C948 35 960 58 990 78C1012 93 1032 105 1066 113" />
      </defs>
      <rect width="1232" height="309" fill="#e1e3b9" />
      <g filter="url(#soft)">
        <path d="M-10-10H96V55L216 72V88L300 80H340L216 100V320H-10Z" fill="#e3e1e3" />
        <path d="M96-5H420V70H190L120 60L100 35Z" fill="#dfe5b4" />
        <path d="M95-5H150L145 12L130 24L112 18Z" fill="#97b676" />
        <path d="M290-5H347L344 55L330 62L318 45L300 25Z" fill="#8eb06c" />
        <path d="M216 78L275 76L280 130L272 160L288 200L285 266H216Z" fill="#b5cb92" />
        <path d="M0 88H190V92H0Z" fill="#cfcf98" />
        <path d="M18 168L38 180L50 220L25 214L12 205Z" fill="#b4c894" />
        <path d="M170 165L188 150V178L165 195L150 190Z" fill="#b9cb9b" />
        <path d="M290 75H368V130L360 270H290L276 160Z" fill="#dfe1b7" />
        <path d="M368 0H430L445 60L440 90L470 140L460 300H360L370 130Z" fill="#e6e9b0" />
        <path d="M300 225H365V300H290Z" fill="#d9d7b4" />
        <path d="M437 0H512L520 40L538 70L500 82L472 90L455 65Z" fill="#aecb94" />
        <path d="M480 98L520 82L522 108L500 112Z" fill="#bcd68c" />
      </g>
      <path d="M525 78L548 82L610 145L660 190L650 230L632 262L600 309H220V270H465V200L480 150L510 130Z" fill="#e6e2e4" />
      <path d="M538 74L470 104L512 135L474 200L466 262L470 300L600 290L648 232L660 195L640 160L600 130Z" fill="#e7e3e4" />
      <g filter="url(#soft)">
        <path d="M440 110L462 95L500 132L474 190L455 235L452 262H378L372 130Z" fill="#e6e9b0" />
        <path d="M400 309L470 285H610L655 215L720 208L830 230L960 234L1010 250L1055 278L1232 284V320H400Z" fill="#e4e8b3" />
        <path d="M655 172L715 176L722 202L670 215Z" fill="#a5c07f" />
      </g>
      <path d="M509 0C512 50 535 80 571 103L616 140L655 171L699 178L804 193L892 202L927 218L962 232L1006 243L1050 269L1116 267L1181 255L1232 253V158L1168 153L1107 134L1050 114L962 84L896 46L815 0Z" fill="#9eb3d2" />
      <path d="M531 0C535 40 580 85 637 135C660 150 700 158 756 157L786 165L830 178L885 184L888 172L874 144L852 112L826 77L808 65L760 53L708 31L668 12L644 0Z" fill="#b2d199" />
      <path d="M598 0C598 50 625 75 655 102L677 91L712 112H743L756 133L791 140L789 162L885 184L888 172L874 144L852 112L826 77L808 65L760 53L708 31L668 12L644 0Z" fill="#8fb475" />
      <g filter="url(#soft)">
        <path d="M658 102L677 92L705 112L738 114L756 133L788 142L785 160L700 152L648 132Z" fill="#d8dfa9" />
        <path d="M630 64L650 56L658 66L640 74Z" fill="#b9cf92" />
        <path d="M790 155L832 160L828 170Z" fill="#a9c488" />
      </g>
      <path d="M815 0H1232V158L1168 153L1107 134L1050 114L962 84L896 46Z" fill="#dbe0b7" />
      <g filter="url(#soft)">
        <path d="M940-5H1240V88H1062L1040 80L1015 58L985 38L955 20Z" fill="#8fb476" />
        <path d="M985-5H1008L1018 30L1035 72L1010 62L992 28Z" fill="#d3dba8" />
        <path d="M1160 30L1188 6L1205-5H1240V62L1198 56Z" fill="#d3dbac" />
        <path d="M1080 40L1120 10M1050 70L1100 60" stroke="#9dbd83" strokeWidth="10" />
        <path d="M975 270L1003 262L1050 282L1032 312H1008L1004 288L980 284Z" fill="#a6bf80" />
        <path d="M1184 258L1240 254V275H1184Z" fill="#dcdad0" />
      </g>
      <path d="M703 178L808 193L892 202L930 221L962 232L830 228L751 213L716 197Z" fill="#dcdadc" />
      <path d="M703 180L808 196L892 204L925 222" stroke="#eceeee" strokeWidth="7" fill="none" strokeLinejoin="round" />

      <g fill="none" stroke="#a3adbb" strokeWidth="3">
        <path d="M540 70C520 85 500 80 490 90L482 100L438 100L436 112L414 132L440 165L460 172C465 190 440 172 420 178C405 190 425 200 440 188C455 175 462 205 458 212C440 190 418 200 400 222C412 230 420 218 420 228C425 245 452 228 452 262" />
      </g>
      <path d="M222 26c8-8 18-4 16 4c-6 8-14 4-16-4ZM270 28l22 16l-16-8ZM194 3l20 6Z" fill="#9fb0c6" />
      <path d="M402 220l24-18c8 0 2 10-18 22Z" fill="#b7c2cf" stroke="#96a3b8" strokeWidth="2" />

      <g fill="none" stroke="#9b999c" strokeWidth="2">
        <path d="M0 14C20 20 30 20 42 34L60 46V67M60 46H68M191 0V67" stroke="#a3a1a4" />
        <path d="M345 69V115L352 125L340 140C325 165 325 175 335 200H347M370 215L373 262" />
        <path d="M830 230V268L798 291L797 309M830 253H850M953 237L950 250L929 258L925 275L914 309M922 273C945 280 950 272 965 268H980V258L975 252L972 268M1106 273V309M1211 267L1209 309M1138 20H1232M1224 0V45M664 98L700 125L758 157" strokeWidth="1.5" />
        <path d="M10 75V105H48M20 75V96M32 75V96M46 78V105M60 80L90 76M100 80V72M110 80V72M72 76V82M84 76V82M0 95H48" stroke="#aaa8ab" strokeWidth="1.5" />
        <path d="M88 96H115M88 96V136H112V96M100 112H112M133 96H150V135C140 142 132 136 133 128ZM150 105H162M150 120H160M22 114H40V131H22ZM56 84V150M44 120H54M50 136V160H76V190M25 150C30 165 40 160 50 160M75 140L86 155M92 150C105 140 115 146 112 165H95M112 150L102 165M120 128H133M165 96H212L208 106M165 124H188M170 136V160M191 148H208M191 162H206M191 176L200 168M193 198H214V238H193ZM193 212H214M193 225H214M95 180H118V194H95ZM122 180H132V165M156 199H188M150 152L158 160M45 176H75C78 195 55 200 50 185V160M110 218V235M118 228V262M102 228H112M136 256H152M60 256V262" stroke="#a5a3a6" strokeWidth="1.8" />
      </g>
      <g fill="none" stroke="#fff" strokeWidth="6" strokeOpacity=".6">
        <path d="M0 69H408C420 69 425 52 438 53L422 0" />
        <path d="M830 230H870L954 235L993 242L1014 255L1055 280L1232 285" />
      </g>
      <g fill="none" stroke="#8d8b8e" strokeWidth="2.6">
        <path d="M0 69H408C420 69 425 52 438 53L422 0" />
        <path d="M47 69L50 142M0 148C10 138 20 142 50 142C75 144 84 148 85 160V220M187 67V266M122 76V198M85 175H118L122 168M122 198H140V215L142 225L136 244H105M36 265V240C40 222 60 225 85 220C105 235 104 245 105 266M136 240L155 264" />
        <path d="M0 295C20 285 15 305 18 309M36 298L44 309M104 298V309M187 298V309M112 298L120 309M128 309L140 298M170 298L180 309M218 305H345V298M525 297L510 309" stroke="#99979a" strokeWidth="2" />
        <path d="M830 230H870L954 235L993 242L1014 255L1055 280L1232 285" />
        <path d="M606 272L632 250L640 250" strokeWidth="2" />
      </g>

      <g fill="none" stroke="#f6cfc0" strokeWidth="6" strokeOpacity=".8">
        <path d="M438 53L468 98L512 135M708 38L677 81L618 158M644 171L677 186L716 206L756 218L830 230" />
      </g>
      <g fill="none" stroke="#b5384a" strokeWidth="1.8">
        <path d="M438 53C450 70 455 90 468 100L512 137L560 162M708 38L677 81L616 162L588 215" strokeWidth="2.2" />
        <path d="M620 172L644 171L677 186L716 206L756 218L830 230" strokeWidth="2.2" />
        <path d="M480 110L486 106L500 120C540 120 590 135 620 160L660 193" strokeWidth="2.2" />
        <path d="M538 84L540 90L548 88L564 104L590 132L586 138L560 128L526 120ZM540 90L528 122M548 88L543 112L556 120L565 108M528 120L546 124L560 108M543 112L535 110M534 120L548 122M580 118L562 130M572 128L582 118" />
        <path d="M510 137L490 170L474 210L465 240L468 252L474 250L482 206M498 152L525 172L520 186L510 262M510 145L534 160L520 180L534 185M498 155L492 178L500 182M486 181H500L495 206H478M481 193H498M478 206L498 208L490 262M493 230L508 232M508 160L502 190L495 262M520 160L528 140M530 158L538 144M545 165L558 144M556 170L572 150M560 155L545 155M534 148L560 168L575 175M538 172L520 160" />
        <path d="M556 202L516 262M556 202L600 236M566 210L530 262M578 218L546 262M520 228L536 208L546 215L526 250M600 170L584 200L554 262M616 170L590 214M628 185L602 230L580 262M640 195L610 240M650 200L625 248M588 208L634 242M580 190L658 240M592 175L605 160L620 166L600 200L632 228M620 166L656 196L660 215L632 252M598 182L645 220M612 172L588 212M636 160L624 185M658 192L634 238M604 236L580 250" />
      </g>

      <path d="M868-4C880 12 900 10 925 12M1063 107C1090 95 1120 82 1150 91C1170 102 1200 103 1240 107" fill="none" stroke="#fff" strokeWidth="12" />
      <path d="M868-4C880 12 900 10 925 12M1063 107C1090 95 1120 82 1150 91C1170 102 1200 103 1240 107" fill="none" stroke="#6d6b66" strokeWidth="7" />
      <rect x="1170" y="85" width="27" height="23" fill="#fff" stroke="#777" strokeWidth="2" />
      <text x="1183" y="101" fontSize="13" fontWeight="700" textAnchor="middle" fill="#444">7</text>
      <g fill="#58585a" stroke="#fff" strokeWidth="4" strokeOpacity=".85" paintOrder="stroke" fontWeight="500">
        <text fontSize="18"><textPath href="#lougheed">Lougheed Highway</textPath></text>
        <text x="97" y="75" fontSize="18">96 Avenue</text>
        <text x="0" y="188" fontSize="18">ve</text>
      </g>
      <g fill="#6f696c" fontWeight="500">
        <text x="550" y="188" fontSize="18">Fort Langley</text>
        <text x="736" y="246" fontSize="17" fill="#858380">Fort Langley Airport</text>
      </g>
      <path transform="translate(815 207) rotate(-38) scale(1.1)" d="M0-15C2-15 2.5-12 2.5-8V-4L14 4V7L2.5 3V9L6 12V14L0 12.5L-6 14V12L-2.5 9V3L-14 7V4L-2.5-4V-8C-2.5-12-2-15 0-15Z" fill="#3f4245" />
    </svg>
  );
}

/* ---------- visual preview ---------- */

const rowIds = [66, 67, 68, 69, 70, 71, 72, 73, 74, 75];

function TablePane() {
  return (
    <section aria-label="Table" className="flex w-[354px] shrink-0 flex-col text-[14px] text-[#2e2e30]">
      <h3 className="flex h-[27px] items-center pl-1 text-[#4a4a4d]">Table</h3>
      <div className="mt-1.5 flex h-[25px] gap-2.5">
        <Combo label="Feature type" value="ROADS" className="flex-1" />
        <button type="button" className="w-[91px] border-b border-[#dad8dc] bg-[#fdfdfe]">Columns...</button>
      </div>
      <div className="mt-[9px] flex h-[337px] overflow-hidden border border-[#c2c0c4] bg-[#fefefe]">
        <div className="flex-1">
          <table className="h-[335px] table-fixed border-collapse">
            <thead>
              <tr className="h-8"><td className="w-9" /><th scope="col" className="w-[143px] pr-9 text-center whitespace-nowrap">&lt;no schema&gt;</th></tr>
            </thead>
            <tbody>
              {rowIds.map((n) => (
                <tr key={n} className="h-[30px]">
                  <th scope="row" className="pl-1.5 text-left text-[15px]">{n}</th>
                  <td className={`border-r border-[#dddbdd] ${n % 2 ? "" : "bg-[#eae8ea]"}`} />
                </tr>
              ))}
            </tbody>
          </table>
        </div>
        <div className="w-[21px] bg-[#f2f0f4] pt-[192px]"><div className="mx-[3px] h-[25px] bg-[#858385]" /></div>
      </div>
      <div className="mt-[11px] flex h-6 items-center">
        <span className="ml-1"><SearchGlyph /></span>
        <Combo label="Search text" value="" className="ml-1 h-6 w-[98px]" off />
        <span className="w-7 text-center text-[#929295]">in</span>
        <Combo label="Search column" value="any column" className="h-6 w-[122px]" off />
        <span className="ml-auto whitespace-nowrap">112 row(s)</span>
      </div>
    </section>
  );
}

function GraphicsPane() {
  return (
    <section aria-label="Graphics" className="ml-6 flex min-w-0 flex-1 flex-col text-[14px] text-[#2e2e30]">
      <h3 className="flex h-[27px] items-center pl-1 text-[#4a4a4d]">Graphics</h3>
      <div role="toolbar" aria-label="Graphics" className="mt-[5px] flex h-[53px] items-center">
        <ViewButton icon={<TwoDIcon />} label="2D" active pad="tight" />
        <ViewButton icon={<ThreeDIcon />} label="3D" pad="tight" />
        <ViewButton icon={<SlideIcon />} label="Slideshow" />
        <Sep />
        <ViewButton icon={<OrbitIcon />} label="Orbit" off />
        <ViewButton icon={<PickIcon />} label="Select" active />
        <ViewButton icon={<PanIcon s={24} />} label="Pan" />
        <ViewButton icon={<ZoomIcon s={24} />} label="Zoom In" />
        <ViewButton icon={<ZoomIcon s={24} kind="out" />} label="Zoom Out" pad="wide" />
        <Sep />
        <ViewButton icon={<ZoomIcon s={24} kind="info" off />} label="Zoom Selected" off pad="wide" />
        <ViewButton icon={<ExtentsIcon s={24} />} label="Zoom Extents" pad="wide" />
        <Sep />
        <ViewButton icon={<NoGeomIcon />} label="Select No Geometry" pad="wide" />
        <ViewButton icon={<FilterIcon />} label="Filter" pad="wide" />
        <Sep />
        <ViewButton icon={<BackgroundIcon />} label="Background" />
        <Sep />
        <span className="ml-3 flex items-center"><StamenIcon /><Combo label="Background map" value="STAMEN: terrain" className="h-6 w-[156px]" /></span>
      </div>
      <div className="relative mt-1.5 mr-[13px] h-[309px] overflow-hidden border border-[#858385]">
        <TerrainMap />
        <p className="absolute bottom-3 left-0 bg-white/80 py-1.5 pr-2 pl-3 font-['Noto_Sans',sans-serif] leading-5 whitespace-nowrap text-[#3a3a3d]">
          Map tiles by <a href="#stamen" className="text-[#3a2fc8] underline">Stamen Design</a>, under{" "}
          <a href="#cc-by" className="text-[#3a2fc8] underline">CC BY 3.0</a>. Data by{" "}
          <a href="#osm" className="text-[#3a2fc8] underline">OpenStreetMap</a>, under{" "}
          <a href="#cc-by-sa" className="text-[#3a2fc8] underline">CC BY SA</a>.
        </p>
      </div>
      <div className="mt-[13px] mr-2.5 flex h-6 items-center justify-end whitespace-nowrap">
        <span className="mr-3.5">X:</span><span className="mr-3.5">526200.9509</span>
        <span className="mr-3.5">Y:</span><span className="mr-2">5446014.6853</span>
        <Combo label="Coordinate system" value="UTM83-10" className="h-6 w-[466px]" />
        <span className="ml-1.5">METER</span>
      </div>
    </section>
  );
}

function VisualPreview() {
  return (
    <section aria-label="Visual Preview" className="mt-[11px] flex min-h-0 flex-1 flex-col">
      <DockHeader title="Visual Preview" />
      <div className="flex">
        <div role="toolbar" aria-label="Preview views" className="mr-4 flex w-[33px] flex-col items-center pt-[5px]">
          <button type="button" aria-label="Auto inspect" className="mb-1.5 flex h-7 w-8 items-center justify-center bg-[#cce8fb]"><AutoInspectIcon /></button>
          <button type="button" aria-label="Layout" className="flex h-[30px] w-8 items-center justify-center"><LayoutIcon /></button>
          <button type="button" aria-label="Table view" className="flex h-7 w-8 items-center justify-center bg-[#cce8fb]"><GridIcon /></button>
          <button type="button" aria-label="Graphics view" className="flex h-7 w-8 items-center justify-center bg-[#cce8fb]"><ScatterIcon /></button>
          <button type="button" aria-label="Feature information" className="mb-1.5 flex h-7 w-8 items-center justify-center"><InfoIcon /></button>
          <button type="button" aria-label="Open in inspector" className="flex h-7 w-8 items-center justify-center"><InspectorIcon /></button>
        </div>
        <TablePane />
        <GraphicsPane />
      </div>
      <div role="tablist" aria-label="Output" className="mt-auto mb-0.5 flex h-[26px] items-center pl-1 text-[14px] text-[#4a4a4d]">
        <button type="button" role="tab" aria-selected="true" className="h-full bg-[#fafafb] px-[11px]">Visual Preview</button>
        <button type="button" role="tab" aria-selected="false" className="h-full px-5">Translation Log</button>
      </div>
    </section>
  );
}

export default function App() {
  return (
    <div className="h-screen overflow-hidden bg-black px-[54px] font-['Open_Sans',sans-serif]">
      <div className="flex h-full flex-col bg-[#f2f0f4]">
        <TitleBar />
        <nav aria-label="Menu" className="flex h-[29px] shrink-0 items-center gap-px bg-[#fefefe] text-[14px] text-[#9a9a9d]">
          {menus.map((m) => <button key={m} type="button" className="px-2.5">{m}</button>)}
        </nav>
        <MainToolbar />
        <div className="flex min-h-0 flex-1">
          <SidePanels />
          <main className="ml-1.5 flex min-w-0 flex-1 flex-col">
            <div role="tablist" aria-label="Workspaces" className="flex h-[30px] shrink-0 items-center text-[14px] text-[#333]">
              <div className="flex h-full items-center gap-4 pr-4 pl-[15px]">
                <button type="button" role="tab" aria-selected="false">Start</button>
                <button type="button" aria-label="Close Start"><X size={14} strokeWidth={3} /></button>
              </div>
              <div className="flex h-full items-center gap-4 bg-[#fafafb] px-3">
                <button type="button" role="tab" aria-selected="true">Main</button>
                <button type="button" aria-label="Close Main"><X size={14} strokeWidth={3} /></button>
              </div>
            </div>
            <div className="mr-1.5 ml-px"><Canvas /></div>
            <VisualPreview />
          </main>
        </div>
        <footer className="h-[37px] shrink-0 border-t-2 border-b-2 border-t-[#bebcc0] border-b-[#8a888c]" />
      </div>
    </div>
  );
}
